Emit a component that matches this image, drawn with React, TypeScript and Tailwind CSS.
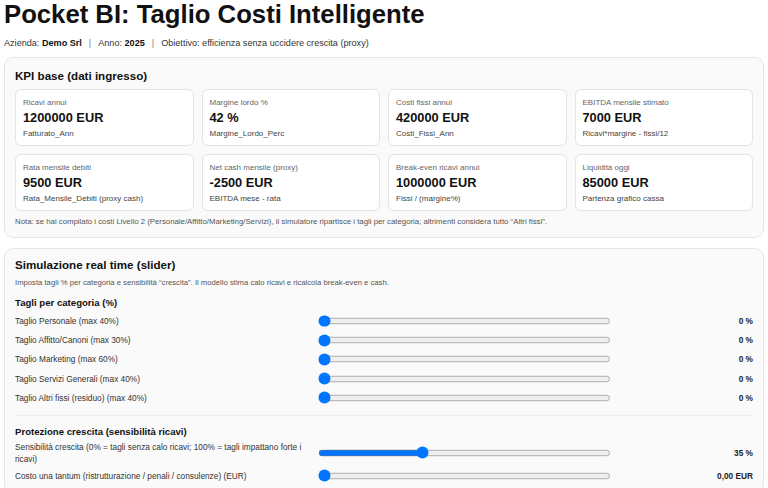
import { useState } from 'react';

interface Kpi {
  label: string;
  value: string;
  sub: string;
}

const kpis: Kpi[] = [
  { label: 'Ricavi annui', value: '1200000 EUR', sub: 'Fatturato_Ann' },
  { label: 'Margine lordo %', value: '42 %', sub: 'Margine_Lordo_Perc' },
  { label: 'Costi fissi annui', value: '420000 EUR', sub: 'Costi_Fissi_Ann' },
  { label: 'EBITDA mensile stimato', value: '7000 EUR', sub: 'Ricavi*margine - fissi/12' },
  { label: 'Rata mensile debiti', value: '9500 EUR', sub: 'Rata_Mensile_Debiti (proxy cash)' },
  { label: 'Net cash mensile (proxy)', value: '-2500 EUR', sub: 'EBITDA mese - rata' },
  { label: 'Break-even ricavi annui', value: '1000000 EUR', sub: 'Fissi / (margine%)' },
  { label: 'Liquidità oggi', value: '85000 EUR', sub: 'Partenza grafico cassa' },
];

const tagli = [
  { key: 'personale', label: 'Taglio Personale (max 40%)', max: 40 },
  { key: 'affitto', label: 'Taglio Affitto/Canoni (max 30%)', max: 30 },
  { key: 'marketing', label: 'Taglio Marketing (max 60%)', max: 60 },
  { key: 'servizi', label: 'Taglio Servizi Generali (max 40%)', max: 40 },
  { key: 'altri', label: 'Taglio Altri fissi (residuo) (max 40%)', max: 40 },
];

const SliderRow = ({
  label,
  value,
  max,
  display,
  onChange,
}: {
  label: string;
  value: number;
  max: number;
  display: string;
  onChange: (v: number) => void;
}) => (
  <div className="flex items-center">
    <div className="w-[296px] text-[8.3px] leading-[12px] text-[#333]">{label}</div>
    <div className="ml-[7px] w-[293px] flex items-center">
      {/* native range, shrunk to the reference's thumb size */}
      <input
        type="range"
        min={0}
        max={max}
        value={value}
        onChange={(e) => onChange(Number(e.target.value))}
        className="w-[366px] h-[15px] m-0 [zoom:0.8] accent-[#0075ff]"
      />
    </div>
    <div className="flex-1 text-right text-[8.3px] leading-[12px] font-bold text-[#222]">{display}</div>
  </div>
);

const App = () => {
  const [cuts, setCuts] = useState<Record<string, number>>({
    personale: 0,
    affitto: 0,
    marketing: 0,
    servizi: 0,
    altri: 0,
  });
  const [sens, setSens] = useState(35);
  const [oneOff, setOneOff] = useState(0);

  return (
    <div className="min-h-screen bg-white px-[4px] font-['Liberation_Sans',Arial,sans-serif] text-[#111]">
      {/* Header */}
      <h1 className="text-[25.7px] leading-[29px] font-bold text-[#111]">Pocket BI: Taglio Costi Intelligente</h1>
      <p className="mt-[9px] text-[9.1px] leading-[10px] text-[#333]">
        Azienda: <b className="text-[#111]">Demo Srl</b>
        <span className="mx-[7px] text-[#777]">|</span>
        Anno: <b className="text-[#111]">2025</b>
        <span className="mx-[7px] text-[#777]">|</span>
        Obiettivo: efficienza senza uccidere crescita (proxy)
      </p>

      {/* KPI */}
      <section className="mt-[9px] rounded-[9px] border border-[#e6e6e6] bg-[#fafafa] px-[10px] pt-[11px] pb-[10px]">
        <h2 className="text-[11.6px] leading-[14px] font-bold text-[#111]">KPI base (dati ingresso)</h2>
        <div className="mt-[6px] grid grid-cols-4 gap-[8px]">
          {kpis.map((k) => (
            <div key={k.label} className="rounded-[6px] border border-[#e3e3e3] bg-white px-[7px] pt-[7px] pb-[6px]">
              <div className="text-[8px] leading-[11px] text-[#666]">{k.label}</div>
              <div className="mt-[2px] text-[12.8px] leading-[16px] font-bold text-[#111]">{k.value}</div>
              <div className="mt-[2px] text-[8px] leading-[11px] text-[#444]">{k.sub}</div>
            </div>
          ))}
        </div>
        <p className="mt-[6px] text-[7.8px] leading-[10px] text-[#555]">
          Nota: se hai compilato i costi Livello 2 (Personale/Affitto/Marketing/Servizi), il simulatore ripartisce i tagli per categoria; altrimenti considera tutto “Altri fissi”.
        </p>
      </section>

      {/* Simulazione */}
      <section className="mt-[10px] rounded-[9px] border border-[#e6e6e6] bg-[#fafafa] px-[10px] pt-[9px] pb-[10px]">
        <h2 className="text-[11.6px] leading-[14px] font-bold text-[#111]">Simulazione real time (slider)</h2>
        <p className="mt-[6px] text-[7.7px] leading-[10px] text-[#555]">
          Imposta tagli % per categoria e sensibilità “crescita”. Il modello stima calo ricavi e ricalcola break-even e cash.
        </p>

        <h3 className="mt-[9px] text-[9.6px] leading-[11px] font-bold text-[#111]">Tagli per categoria (%)</h3>
        <div className="mt-[7px] flex flex-col gap-[7.2px]">
          {tagli.map((t) => (
            <SliderRow
              key={t.key}
              label={t.label}
              value={cuts[t.key]}
              max={t.max}
              display={`${cuts[t.key]} %`}
              onChange={(v) => setCuts({ ...cuts, [t.key]: v })}
            />
          ))}
        </div>

        <div className="mt-[11px] border-t border-[#ececec]" />

        <h3 className="mt-[10px] text-[9.6px] leading-[11px] font-bold text-[#111]">Protezione crescita (sensibilità ricavi)</h3>
        <div className="mt-[4px] flex flex-col gap-[5px]">
          <SliderRow
            label="Sensibilità crescita (0% = tagli senza calo ricavi; 100% = tagli impattano forte i ricavi)"
            value={sens}
            max={100}
            display={`${sens} %`}
            onChange={setSens}
          />
          <SliderRow
            label="Costo una tantum (ristrutturazione / penali / consulenze) (EUR)"
            value={oneOff}
            max={100000}
            display={`${oneOff.toFixed(2).replace('.', ',')} EUR`}
            onChange={setOneOff}
          />
        </div>
      </section>
    </div>
  );
};

export default App;
